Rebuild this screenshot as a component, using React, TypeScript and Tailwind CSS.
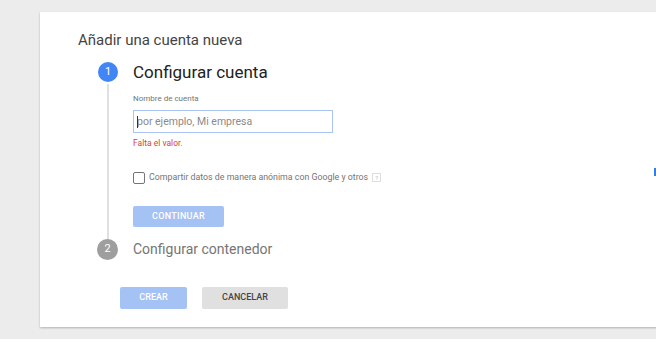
import React from "react";

export default function App() {
  return (
    <div
      className="relative w-[656px] h-[339px] overflow-hidden bg-[#ececec]"
      style={{ fontFamily: "Roboto, 'Noto Sans', sans-serif" }}
    >
      <div className="absolute left-[40px] top-[12px] w-[640px] h-[315px] bg-white shadow-[0_1px_2px_rgba(0,0,0,0.25)]">
        <div className="pl-[38px] pt-[19px]">
          <div className="text-[15px] leading-[18px] text-[#444]">Añadir una cuenta nueva</div>
          <div className="flex mt-[13px]">
            <div className="flex flex-col items-center w-[22px] mr-[33px] ml-[19px]">
              <div className="w-[20px] h-[20px] rounded-full bg-[#4285f4] text-white text-[11px] flex items-center justify-center">1</div>
              <div className="w-[2px] flex-1 bg-[#e0e0e0] mt-[2px]"></div>
            </div>
            <div className="ml-[-19px] flex flex-col">
              <div className="text-[17px] leading-[20px] text-[#222]">Configurar cuenta</div>
              <div className="text-[8px] leading-[10px] text-[#757575] mt-[12px]">Nombre de cuenta</div>
              <div className="relative mt-[6px] w-[200px] h-[23px] border border-[#a9c4f5] flex items-center px-[3px]">
                <span className="text-[10.5px] text-[#8a8a8a]">por ejemplo, Mi empresa</span>
                <span className="absolute left-[3px] top-[5px] w-[1px] h-[12px] bg-[#333]"></span>
              </div>
              <div className="text-[8.5px] leading-[11px] text-[#db4437] mt-[5px]">Falta el valor.</div>
              <div className="flex items-center mt-[22px]">
                <div className="w-[12px] h-[12px] border border-[#757575] rounded-[2px]"></div>
                <span className="text-[8.8px] text-[#757575] ml-[4px]">Compartir datos de manera anónima con Google y otros</span>
                <span className="ml-[4px] w-[9px] h-[9px] border border-[#ddd] text-[6px] text-[#bbb] flex items-center justify-center">?</span>
              </div>
              <div className="mt-[22px] mb-[12px] w-[91px] h-[21px] bg-[#a4c2f4] rounded-[2px] text-white text-[9px] font-medium tracking-[0.3px] flex items-center justify-center">CONTINUAR</div>
            </div>
          </div>
          <div className="flex items-center ml-[19px]">
            <div className="w-[21px] h-[21px] rounded-full bg-[#9e9e9e] text-white text-[11px] flex items-center justify-center">2</div>
            <div className="ml-[15px] text-[14px] text-[#757575]">Configurar contenedor</div>
          </div>
          <div className="flex mt-[27px] ml-[42px] gap-[15px]">
            <div className="w-[67px] h-[22px] bg-[#a4c2f4] rounded-[2px] text-white text-[9px] font-medium flex items-center justify-center">CREAR</div>
            <div className="w-[86px] h-[22px] bg-[#e0e0e0] rounded-[2px] text-[#444] text-[9px] font-medium flex items-center justify-center">CANCELAR</div>
          </div>
        </div>
      </div>
      <div className="absolute left-[654px] top-[168px] w-[2px] h-[8px] bg-[#2d7ff0]"></div>
    </div>
  );
}
